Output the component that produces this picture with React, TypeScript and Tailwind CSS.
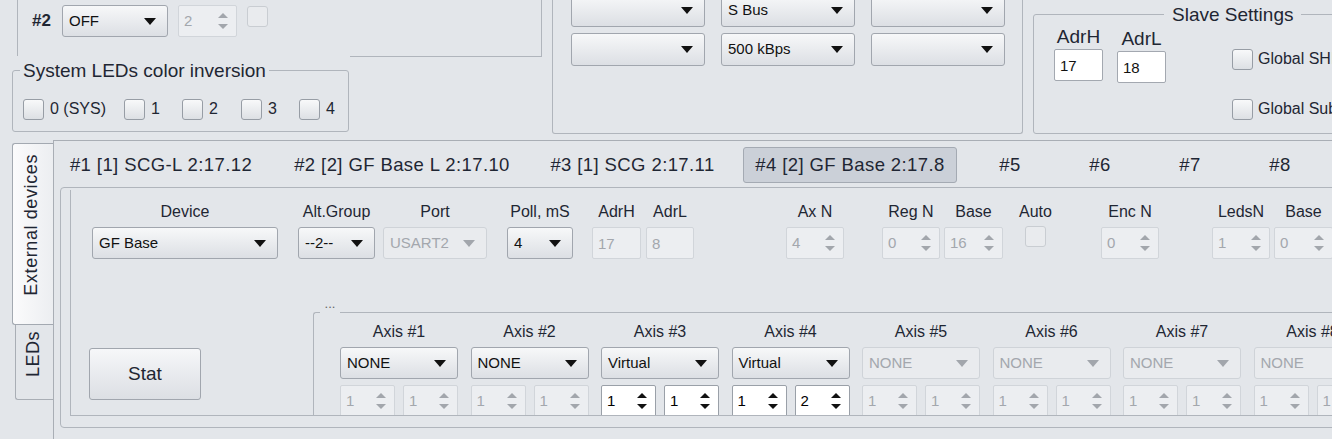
import React from 'react';

type Box = { className?: string };

function DownArrow({ muted }: { muted?: boolean }) {
  return (
    <svg width="12" height="7" viewBox="0 0 12 7" className="shrink-0">
      <path d="M0 0H12L6 7Z" fill={muted ? '#a2a6ac' : '#111'} />
    </svg>
  );
}

function Combo({ value = '', className = '', disabled = false, tall = false }: Box & { value?: string; disabled?: boolean; tall?: boolean }) {
  const tone = disabled
    ? 'border-[#cfd3d8] bg-[#e9ebee] text-[#a3a7ad]'
    : 'border-[#a1a6ae] bg-linear-to-b from-[#f7f8f9] to-[#dcdfe4] text-[#111]';
  return (
    <div className={`flex shrink-0 ${tall ? 'h-[33px]' : 'h-[32px]'} items-center justify-between rounded-[3px] border pl-[6px] pr-[11px] text-[15px] ${tone} ${className}`}>
      <span className="whitespace-nowrap">{value}</span>
      <DownArrow muted={disabled} />
    </div>
  );
}

function Spin({ value, className = '', enabled = false }: Box & { value: string; enabled?: boolean }) {
  const fill = enabled ? '#111' : '#a2a6ac';
  const tone = enabled ? 'border-[#9aa0a8] bg-white text-[#000]' : 'border-[#d1d5da] bg-[#eceef1] text-[#a3a7ad]';
  return (
    <div className={`flex h-[32px] shrink-0 items-center justify-between rounded-[2px] border pl-[5px] pr-[8px] text-[15px] ${tone} ${className}`}>
      <span>{value}</span>
      <span className="flex flex-col gap-[6px]">
        <svg width="10" height="5" viewBox="0 0 10 5">
          <path d="M0 5H10L5 0Z" fill={fill} />
        </svg>
        <svg width="10" height="5" viewBox="0 0 10 5">
          <path d="M0 0H10L5 5Z" fill={fill} />
        </svg>
      </span>
    </div>
  );
}

function Field({ value, className = '', enabled = false }: Box & { value: string; enabled?: boolean }) {
  const tone = enabled ? 'border-[#a3a8b0] bg-white text-[#111]' : 'border-[#d1d5da] bg-[#eceef1] text-[#a3a7ad]';
  return (
    <div className={`flex h-[32px] shrink-0 items-start rounded-[2px] border pl-[5px] pt-[5px] text-[15px] ${tone} ${className}`}>
      {value}
    </div>
  );
}

function Check({ disabled = false }: { disabled?: boolean }) {
  return (
    <span
      className={`block h-[21px] w-[21px] shrink-0 rounded-[3px] border ${
        disabled ? 'border-[#c9cdd2] bg-[#e9ebee]' : 'border-[#979da5] bg-linear-to-b from-[#f8f9fa] to-[#dde0e4]'
      }`}
    />
  );
}

function Col({ label, className = '', children }: Box & { label: string; children: React.ReactNode }) {
  return (
    <div className={`flex shrink-0 flex-col items-center ${className}`}>
      <div className="mb-[5px] h-[20px] whitespace-nowrap text-[16px] leading-[20px]">{label}</div>
      {children}
    </div>
  );
}

const deviceTabs = [
  { label: '#1 [1] SCG-L 2:17.12', w: 'w-[198px]', ml: 'ml-0' },
  { label: '#2 [2] GF Base L 2:17.10', w: 'w-[240px]', ml: 'ml-[22px]' },
  { label: '#3 [1] SCG 2:17.11', w: 'w-[187px]', ml: 'ml-[17px]' },
  { label: '#4 [2] GF Base 2:17.8', w: 'w-[214px]', ml: 'ml-[17px]', active: true },
  { label: '#5', w: 'w-[74px]', ml: 'ml-[16px]' },
  { label: '#6', w: 'w-[74px]', ml: 'ml-[16px]' },
  { label: '#7', w: 'w-[74px]', ml: 'ml-[16px]' },
  { label: '#8', w: 'w-[74px]', ml: 'ml-[16px]' },
];

const axes = [
  { n: 1, mode: 'NONE', a: '1', b: '1', on: true, live: false },
  { n: 2, mode: 'NONE', a: '1', b: '1', on: true, live: false },
  { n: 3, mode: 'Virtual', a: '1', b: '1', on: true, live: true },
  { n: 4, mode: 'Virtual', a: '1', b: '2', on: true, live: true },
  { n: 5, mode: 'NONE', a: '1', b: '1', on: false, live: false },
  { n: 6, mode: 'NONE', a: '1', b: '1', on: false, live: false },
  { n: 7, mode: 'NONE', a: '1', b: '1', on: false, live: false },
  { n: 8, mode: 'NONE', a: '1', b: '1', on: false, live: false },
];

const ledBits = [
  { label: '0 (SYS)', w: 'w-[101px]' },
  { label: '1', w: 'w-[58px]' },
  { label: '2', w: 'w-[59px]' },
  { label: '3', w: 'w-[58px]' },
  { label: '4', w: 'w-[40px]' },
];

export default function App() {
  return (
    <div className="h-[439px] w-[1332px] overflow-hidden bg-[#e3e6ea] font-['Liberation_Sans',Arial,sans-serif] text-[#1f2633]">
      {/* top settings strip */}
      <div className="flex h-[134px]">
        <div className="ml-[12px] flex w-[530px] shrink-0 flex-col">
          <div className="ml-[5px] h-[56px] w-[525px] border-x border-[#b0b5bc] pl-[14px] pt-[5px]">
            <div className="flex items-center">
              <span className="w-[30px] text-[17px] font-bold">#2</span>
              <Combo value="OFF" className="w-[106px]" />
              <Spin value="2" className="ml-[10px] w-[59px]" />
              <span className="ml-[10px] self-start pt-[1px]">
                <Check disabled />
              </span>
            </div>
          </div>
          <div className="flex">
            <div className="relative mt-[14px] h-[62px] w-[337px] shrink-0 rounded-[3px] border border-[#b0b5bc]">
              <span className="absolute -top-[11px] left-[7px] bg-[#e3e6ea] px-[3px] text-[19px] leading-[22px] whitespace-nowrap">
                System LEDs color inversion
              </span>
              <div className="flex pl-[10px] pt-[26px]">
                {ledBits.map((b) => (
                  <div key={b.label} className={`flex items-center gap-[6px] ${b.w}`}>
                    <Check />
                    <span className="text-[16px] whitespace-nowrap">{b.label}</span>
                  </div>
                ))}
              </div>
            </div>
            <div className="ml-[1px] h-px flex-1 bg-[#b0b5bc]" />
          </div>
        </div>

        <div className="ml-[10px] h-[134px] w-[471px] shrink-0 rounded-b-[3px] border-x border-b border-[#b0b5bc]">
          <div className="-mt-[6px] flex flex-col gap-[6px] pl-[18px]">
            <div className="flex gap-[16px]">
              <Combo tall className="w-[134px]" />
              <Combo tall value="S Bus" className="w-[134px]" />
              <Combo tall className="w-[134px]" />
            </div>
            <div className="flex gap-[16px]">
              <Combo tall className="w-[134px]" />
              <Combo tall value="500 kBps" className="w-[134px]" />
              <Combo tall className="w-[134px]" />
            </div>
          </div>
        </div>

        <div className="relative ml-[10px] mt-[14px] h-[120px] w-[400px] shrink-0 rounded-[3px] border border-[#b0b5bc]">
          <span className="absolute -top-[11px] left-[130px] bg-[#e3e6ea] px-[8px] text-[19px] leading-[22px] whitespace-nowrap">
            Slave Settings
          </span>
          <div className="flex pl-[20px] pt-[11px]">
            <div className="flex w-[49px] shrink-0 flex-col items-center">
              <div className="h-[22px] text-[19px] leading-[22px]">AdrH</div>
              <Field enabled value="17" className="mt-[1px] w-[49px]" />
            </div>
            <div className="ml-[14px] mt-[2px] flex w-[49px] shrink-0 flex-col items-center">
              <div className="h-[22px] text-[19px] leading-[22px]">AdrL</div>
              <Field enabled value="18" className="mt-[1px] w-[49px]" />
            </div>
            <div className="ml-[66px] mt-[21px] flex shrink-0 flex-col gap-[26px]">
              <div className="flex items-center gap-[5px]">
                <Check />
                <span className="text-[16px] whitespace-nowrap">Global SHIFT</span>
              </div>
              <div className="flex items-center gap-[5px]">
                <Check />
                <span className="text-[16px] whitespace-nowrap">Global Submenu</span>
              </div>
            </div>
          </div>
        </div>
      </div>

      {/* page tabs */}
      <div className="mt-[6px] flex h-[299px]">
        <div className="ml-[12px] flex w-[41px] shrink-0 flex-col items-end pt-[3px]">
          <div className="flex h-[182px] w-[41px] items-center justify-center rounded-l-[3px] border border-r-0 border-[#a3a9b1] bg-linear-to-r from-[#fbfbfc] to-[#eceef1] pb-[18px] pr-[4px]">
            <span className="rotate-180 text-[18px] leading-[22px] tracking-[0.6px] whitespace-nowrap [writing-mode:vertical-rl]">
              External devices
            </span>
          </div>
          <div className="flex h-[75px] w-[38px] items-center justify-center rounded-bl-[3px] border-b border-l border-[#a9aeb5] pb-[16px] pr-[3px]">
            <span className="rotate-180 text-[18px] leading-[22px] tracking-[0.5px] whitespace-nowrap [writing-mode:vertical-rl]">
              LEDs
            </span>
          </div>
        </div>

        <div className="flex-1 border-l border-t border-[#a9aeb5]">
          {/* device tab bar */}
          <div className="flex pl-[8px] pt-[6px]">
            {deviceTabs.map((t) => (
              <div
                key={t.label}
                className={`flex h-[36px] shrink-0 items-center justify-center rounded-[3px] text-[18.5px] tracking-[0.4px] whitespace-nowrap ${t.w} ${t.ml} ${
                  t.active ? 'border border-[#a4aab3] bg-[#cbd0d8]' : ''
                }`}
              >
                {t.label}
              </div>
            ))}
          </div>

          <div className="ml-[6px] mt-[4px] h-[241px] w-[1320px] rounded-[4px] border border-[#b0b5bc]">
            <div className="ml-[9px] mt-[2px] h-[226px] overflow-hidden border-b border-l border-[#b0b5bc]">
              {/* device parameters */}
              <div className="flex items-start pt-[12px]">
                <Col label="Device" className="ml-[21px]">
                  <Combo value="GF Base" className="w-[186px]" />
                </Col>
                <Col label="Alt.Group" className="ml-[20px]">
                  <Combo value="--2--" className="w-[77px]" />
                </Col>
                <Col label="Port" className="ml-[8px]">
                  <Combo disabled value="USART2" className="w-[104px]" />
                </Col>
                <Col label="Poll, mS" className="ml-[20px]">
                  <Combo value="4" className="w-[66px]" />
                </Col>
                <Col label="AdrH" className="ml-[19px]">
                  <Field value="17" className="w-[49px]" />
                </Col>
                <Col label="AdrL" className="ml-[5px]">
                  <Field value="8" className="w-[48px]" />
                </Col>
                <Col label="Ax N" className="ml-[92px]">
                  <Spin value="4" className="w-[58px]" />
                </Col>
                <Col label="Reg N" className="ml-[38px]">
                  <Spin value="0" className="w-[58px]" />
                </Col>
                <Col label="Base" className="ml-[4px]">
                  <Spin value="16" className="w-[59px]" />
                </Col>
                <Col label="Auto" className="ml-[22px] w-[21px]">
                  <span className="-mt-[1px]">
                    <Check disabled />
                  </span>
                </Col>
                <Col label="Enc N" className="ml-[55px]">
                  <Spin value="0" className="w-[58px]" />
                </Col>
                <Col label="LedsN" className="ml-[53px]">
                  <Spin value="1" className="w-[58px]" />
                </Col>
                <Col label="Base" className="ml-[4px]">
                  <Spin value="0" className="w-[59px]" />
                </Col>
              </div>

              {/* axes */}
              <div className="mt-[53px] flex">
                <button className="ml-[18px] mt-[36px] h-[52px] w-[112px] shrink-0 rounded-[3px] border border-[#a1a6ae] bg-linear-to-b from-[#f6f7f9] to-[#dcdfe4] text-[19px] text-[#1f2633]">
                  Stat
                </button>
                <div className="relative ml-[112px] h-[200px] flex-1 rounded-tl-[3px] border-l border-t border-[#b0b5bc]">
                  <span className="absolute -top-[14px] left-[6px] h-[16px] w-[20px] bg-[#e3e6ea] text-center text-[13px] leading-[10px] text-[#666]">
                    ...
                  </span>
                  <div className="flex gap-[12.5px] pl-[26px] pt-[9px]">
                    {axes.map((ax) => (
                      <div key={ax.n} className="flex w-[118px] shrink-0 flex-col">
                        <div className="mb-[5px] h-[20px] text-center text-[16px] leading-[20px] whitespace-nowrap">Axis #{ax.n}</div>
                        <Combo value={ax.mode} disabled={!ax.on} className="w-[118px]" />
                        <div className="mt-[6px] flex justify-between">
                          <Spin value={ax.a} enabled={ax.live} className="w-[55px]" />
                          <Spin value={ax.b} enabled={ax.live} className="w-[55px]" />
                        </div>
                      </div>
                    ))}
                  </div>
                </div>
              </div>
            </div>
          </div>
        </div>
      </div>
    </div>
  );
}
